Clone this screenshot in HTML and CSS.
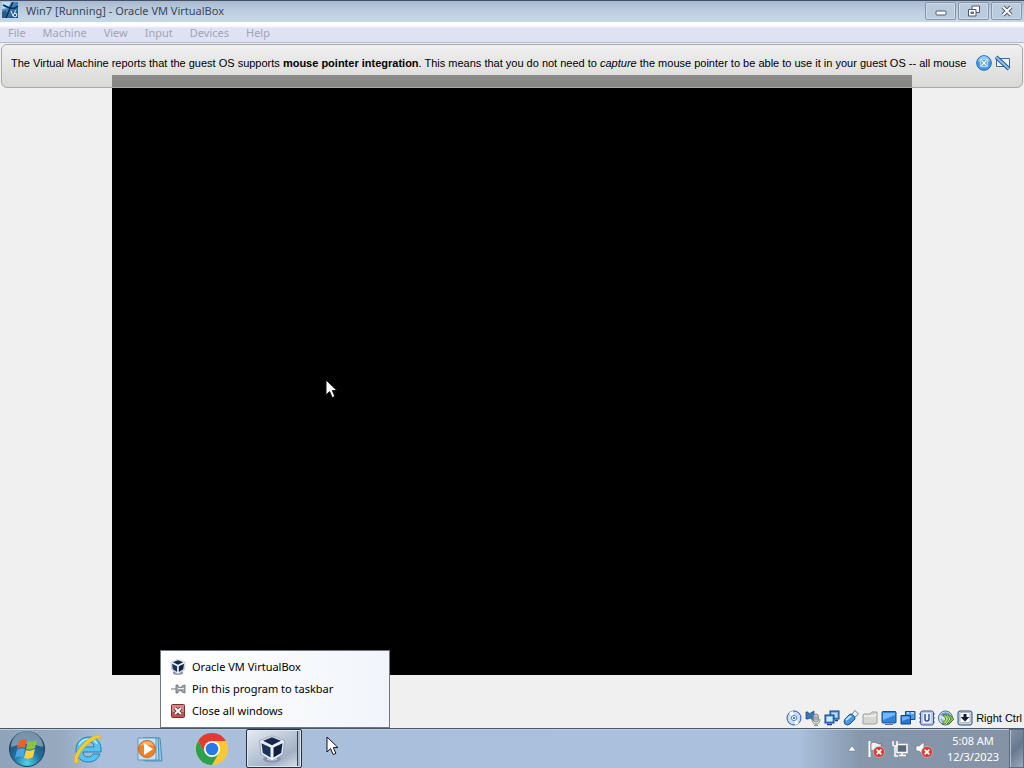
FILE: index.html
```html
<!DOCTYPE html>
<html lang="en">
<head>
    <meta charset="UTF-8">
    <meta name="viewport" content="width=device-width, initial-scale=1.0">
    <title>Win7 [Running] - Oracle VM VirtualBox</title>
    <link rel="stylesheet" href="styles.css">
</head>
<body>
    <svg class="defs" aria-hidden="true">
        <symbol id="vbox" viewBox="0 0 28 28">
            <ellipse cx="14" cy="24" rx="9" ry="3.500" fill="#8793aa"/>
            <ellipse cx="14" cy="23.500" rx="5" ry="2" fill="#e5eaf4"/>
            <path d="M1.500 5.500 14 .8l12.500 4.700-1.500 13.700L14 26 3 19.200z" fill="#e9eef7" stroke="#8290aa" stroke-width=".7"/>
            <path d="M5 5.800 14 2.200l9 3.600-9 4.400z" fill="#13284a"/>
            <path d="M3.500 8.200 12.500 12.600v10L4.800 18z" fill="#1c3359"/>
            <path d="M24.500 8.200 15.500 12.600v10l7.700-4.600z" fill="#10213e"/>
        </symbol>
        <symbol id="pointer" viewBox="0 0 13 20">
            <path d="M1 1v15l3.600-3.400 2.600 6 2.700-1.200-2.600-5.800H12z" fill="#fff" stroke="#111" stroke-width="1"/>
        </symbol>
        <symbol id="badge-x" viewBox="0 0 10 10">
            <circle cx="5" cy="5" r="4.600" fill="#cf3b36" stroke="#f0b0a8" stroke-width=".6"/>
            <path d="M3 3l4 4M7 3L3 7" stroke="#fff" stroke-width="1.500"/>
        </symbol>
    </svg>

    <div class="window">
        <header class="titlebar">
            <svg class="app-icon" viewBox="0 0 17 17">
                <defs>
                    <linearGradient id="app" x1="0" y1="0" x2="1" y2="1">
                        <stop offset="0" stop-color="#6db4e6"/>
                        <stop offset="1" stop-color="#0b4784"/>
                    </linearGradient>
                </defs>
                <path d="M0 0h16v16H0z" fill="url(#app)"/>
                <path d="M0 0h9L6 6 0 7z" fill="#b5e0f7"/>
                <path d="M0 10l4-2 1 8H0z" fill="#2a5a86"/>
                <path d="M11 0Q7 8 4 16M1 3q7 4 12 3l3-2" fill="none" stroke="#102f50" stroke-width="1.500"/>
                <path d="M9 9l2 5 3-6M12 11l3 1-1 3-3-1" fill="none" stroke="#e8f3fc"/>
            </svg>
            <h1>Win7 [Running] - Oracle VM VirtualBox</h1>
            <div class="window-buttons">
                <button aria-label="Minimize">
                    <svg viewBox="0 0 14 12"><rect x="2" y="6" width="10" height="4" rx="1" fill="#fff" stroke="#50586a"/></svg>
                </button>
                <button aria-label="Restore">
                    <svg viewBox="0 0 14 12">
                        <path d="M5 1h7.500v6.500H5z" fill="#fff" stroke="#50586a"/>
                        <path d="M1.500 4.500h7.500V11H1.500z" fill="#fff" stroke="#50586a"/>
                        <path d="M4 7h2.500v1.500H4z" fill="#b9c8dc" stroke="#50586a"/>
                    </svg>
                </button>
                <button aria-label="Close">
                    <svg viewBox="0 0 14 12">
                        <path d="M3 2l8 8M11 2l-8 8" stroke="#50586a" stroke-width="4"/>
                        <path d="M3 2l8 8M11 2l-8 8" stroke="#fff" stroke-width="2"/>
                    </svg>
                </button>
            </div>
        </header>

        <nav class="menubar">
            <a href="#">File</a>
            <a href="#">Machine</a>
            <a href="#">View</a>
            <a href="#">Input</a>
            <a href="#">Devices</a>
            <a href="#">Help</a>
        </nav>

        <main class="guest">
            <div class="message">
                <p>The Virtual Machine reports that the guest OS supports <b>mouse pointer integration</b>. This means that you do not need to <i>capture</i> the mouse pointer to be able to use it in your guest OS -- all mouse</p>
                <button aria-label="Close message">
                    <svg viewBox="0 0 16 16">
                        <circle cx="8" cy="8" r="7.300" fill="#4a9ce6" stroke="#1668b5"/>
                        <path d="M2 7a6 6 0 0 1 12 0q-6-3-12 0z" fill="#8fcaf7"/>
                        <rect x="4" y="4" width="8" height="8" rx="1.500" fill="#c9e6fc"/>
                        <path d="M5.500 5.500l5 5M10.500 5.500l-5 5" stroke="#1f6fb8" stroke-width="3"/>
                        <path d="M5.500 5.500l5 5M10.500 5.500l-5 5" stroke="#fff" stroke-width="1.600"/>
                    </svg>
                </button>
                <button aria-label="Do not show again">
                    <svg viewBox="0 0 16 16">
                        <path d="M1.500 3.500h13v8h-1.500V15l-3.500-3.500h-8z" fill="#edf3fb" stroke="#44678f"/>
                        <path d="M1 2l13 12" stroke="#21558f" stroke-width="4"/>
                        <path d="M1 2l13 12" stroke="#83c2f3" stroke-width="2.200"/>
                    </svg>
                </button>
            </div>
            <div class="display">
                <svg class="guest-pointer"><use href="#pointer"/></svg>
            </div>
        </main>

        <footer class="statusbar">
            <svg viewBox="0 0 16 16"><title>Optical drives</title>
                <circle cx="8" cy="8" r="7" fill="#c9def5" stroke="#2f4fa8"/>
                <path d="M8 8L3 3a7 7 0 0 1 4-2zM8 8l5 5a7 7 0 0 1-4 2z" fill="#fff"/>
                <circle cx="8" cy="8" r="2.600" fill="#fff" stroke="#4e83c4"/>
                <circle cx="8" cy="8" r="1" fill="#1f4c8a"/>
            </svg>
            <svg viewBox="0 0 16 16"><title>Audio</title>
                <path d="M1 2h2l1 2 5-3v10L5 8 3 9H1z" fill="#3d78b6" stroke="#1c4673" stroke-width=".7"/>
                <rect x="8.500" y="4" width="5" height="8" rx="2.500" fill="#c6cbc7" stroke="#7f8984"/>
                <path d="M7 9q0 5 4 5t4-5M11 14v2M9 15.500h4M9 7h4M9 9h4" fill="none" stroke="#88928d"/>
            </svg>
            <svg viewBox="0 0 16 16"><title>Network</title>
                <rect x="6" y="1" width="9" height="8" fill="#4f9be6" stroke="#17427f"/>
                <rect x="7.500" y="2.500" width="6" height="5" fill="#b7dbfa"/>
                <path d="M11 10.500h3" stroke="#17427f" stroke-width="1.500"/>
                <rect x="1" y="5" width="9" height="8" fill="#3d88dd" stroke="#17427f"/>
                <rect x="2.500" y="6.500" width="6" height="5" fill="#d3eafd"/>
                <path d="M3 14.500h5" stroke="#17427f" stroke-width="1.500"/>
            </svg>
            <svg viewBox="0 0 16 16"><title>USB</title>
                <path d="M8.500 4.500l3.500-4 3.500 3.500-4 3.500z" fill="#eef3f8" stroke="#58789c"/>
                <path d="M2 9l5-5q2 0 3.500 1.500T12 9l-5 5q-3 2-5 0-2-2 0-5z" fill="#4b97df" stroke="#1c518f"/>
                <path d="M3 10l5-4" stroke="#c0e2fb" stroke-width="2"/>
            </svg>
            <svg viewBox="0 0 16 16"><title>Shared folders</title>
                <path d="M1 5l1-1h6l2-2h5v11l-2 1H1z" fill="#d6d6d3" stroke="#a0a19e"/>
                <path d="M2 6h11l1-2" fill="none" stroke="#fff"/>
            </svg>
            <svg viewBox="0 0 16 16"><title>Display</title>
                <rect x="1" y="1.500" width="14" height="11.500" rx="1" fill="#2f83dd" stroke="#1b4e90"/>
                <path d="M2 3h12v2L2 10z" fill="#72b8f4"/>
                <path d="M4 14.500h8" stroke="#59748f"/>
            </svg>
            <svg viewBox="0 0 16 16"><title>Recording</title>
                <path d="M5.500 1.500h9.500v8H5.500z" fill="#4d9ae8" stroke="#1c4a8c"/>
                <path d="M7 3h2M11 3h3" stroke="#d8edff" stroke-width="1.500"/>
                <path d="M1 5.500h9.500v8.500H1z" fill="#2874d4" stroke="#174586"/>
                <path d="M2 6.500h7.500v2L2 11z" fill="#6cb0f2"/>
            </svg>
            <svg viewBox="0 0 16 16"><title>Processor</title>
                <rect x="1.500" y="1" width="13" height="14" rx="2" fill="#b9c9f1" stroke="#43579c"/>
                <rect x="4" y="3" width="8" height="10" fill="#eef2ff"/>
                <path d="M6 4v5q0 2 2 2t2-2V4" fill="none" stroke="#354f9d" stroke-width="1.500"/>
                <path d="M0 4h2M0 8h2M0 12h2M14 4h2M14 8h2M14 12h2" stroke="#43579c"/>
            </svg>
            <svg viewBox="0 0 16 16"><title>Mouse integration</title>
                <circle cx="7.500" cy="8" r="7" fill="#d5e6f2" stroke="#466f96"/>
                <path d="M2 5q5-5 10-1L7 7z" fill="#6998bd"/>
                <path d="M3 9l4 5" stroke="#7ca8c8" stroke-width="2"/>
                <path d="M5 5h3l3 4-4 5H4l4-5z" fill="#b7e35c" stroke="#376d1d" stroke-width=".8"/>
                <path d="M10 5h2l4 4-5 5H9l4-5z" fill="#7fc93c" stroke="#376d1d" stroke-width=".8"/>
            </svg>
            <svg viewBox="0 0 16 16"><title>Keyboard</title>
                <rect x="1" y="1" width="14" height="14" rx="2" fill="#c9d8e8" stroke="#294e7a"/>
                <rect x="3" y="2.500" width="10" height="10" rx="1" fill="#fff" stroke="#8095ad" stroke-width=".6"/>
                <path d="M6.500 4h3v3h3L8 11.500 3.500 7h3z" fill="#111d2d"/>
            </svg>
            <span>Right Ctrl</span>
        </footer>
    </div>

    <div class="taskbar">
        <button class="start" aria-label="Start">
            <svg viewBox="0 0 38 38">
                <defs>
                    <radialGradient id="orb" cx=".5" cy=".9" r=".85">
                        <stop offset="0" stop-color="#4fd6ef"/>
                        <stop offset=".45" stop-color="#20719e"/>
                        <stop offset="1" stop-color="#27486c"/>
                    </radialGradient>
                </defs>
                <circle cx="19" cy="19" r="17.500" fill="url(#orb)" stroke="#1d4059"/>
                <path d="M3 17a16 16 0 0 1 32 0q-16-6-32 0z" fill="#c6d9e6" opacity=".5"/>
                <path d="M11 11q4-3 8-1l-2 8q-4-2-8 1z" fill="#e8622b"/>
                <path d="M20 11q4 2 9-1l-2 8q-4 3-9 1z" fill="#8bc53f"/>
                <path d="M9 20q4-3 8-1l-2 8q-4-2-8 1z" fill="#4ba7e3"/>
                <path d="M18 20q4 2 9-1l-2 8q-4 3-9 1z" fill="#fbd044"/>
            </svg>
        </button>
        <div class="apps">
            <button aria-label="Internet Explorer">
                <svg viewBox="0 0 32 32">
                    <path d="M17 4C9 4 4 10 4 17s5 12 12 12c6 0 10-3 12-8h-7c-1 2-3 3-5 3-3 0-5-2-5-5h18C30 10 25 4 17 4zm-6 10c1-3 3-5 6-5s5 2 5 5z" fill="#55c3ee" stroke="#2381b5" stroke-width="1"/>
                    <path d="M7 12q3-6 10-6 6 0 8 5" fill="none" stroke="#b8ecfb" stroke-width="1.500"/>
                    <path d="M29 3c-2-3-10 0-17 7S0 26 3 30c1 1 3 0 4-1-3-1 0-9 6-15S27 3 29 6z" fill="#f4cc35" stroke="#d4a21c" stroke-width=".6"/>
                </svg>
            </button>
            <button aria-label="Windows Media Player">
                <svg viewBox="0 0 32 32">
                    <path d="M11 5h15l2 23H11z" fill="#91c7e4" stroke="#488db7"/>
                    <path d="M9 5h15l1 22H9z" fill="#b4d8ec" stroke="#488db7"/>
                    <path d="M4 5h18v22H4z" fill="#c8e0ef" stroke="#5d99bd"/>
                    <circle cx="13" cy="16" r="8.500" fill="#ee8129" stroke="#cf651b"/>
                    <path d="M6 13a7.500 7.500 0 0 1 14 0q-7-2-14 0z" fill="#f6b16c"/>
                    <path d="M10 10l9 6-9 6z" fill="#fff"/>
                </svg>
            </button>
            <button aria-label="Google Chrome">
                <svg viewBox="0 0 32 32">
                    <circle cx="16" cy="16" r="16" fill="#fcc934"/>
                    <path d="M2.140 8A16 16 0 0 1 29.860 8H16L9.070 20z" fill="#e33b2e"/>
                    <path d="M2.140 8A16 16 0 0 0 16 32L22.930 20H9.070z" fill="#2da04e"/>
                    <circle cx="16" cy="16" r="8" fill="#fff"/>
                    <circle cx="16" cy="16" r="6.300" fill="#2878e8"/>
                </svg>
            </button>
            <button class="active" aria-label="Oracle VM VirtualBox">
                <svg><use href="#vbox"/></svg>
            </button>
        </div>

        <div class="jumplist">
            <button><svg><use href="#vbox"/></svg>Oracle VM VirtualBox</button>
            <button>
                <svg viewBox="0 0 16 16">
                    <path d="M1 8h6" stroke="#777" stroke-width="1"/>
                    <path d="M6 4h2v2l4 .5V5l3-1v8l-3-1V9.500L8 10v2H6z" fill="#a9acae" stroke="#666a6d" stroke-width=".8"/>
                    <path d="M8 7.500h6" stroke="#eee"/>
                </svg>
                Pin this program to taskbar
            </button>
            <button>
                <svg viewBox="0 0 16 16">
                    <rect x="1.500" y="1.500" width="13" height="13" rx="1" fill="#d98786" stroke="#79312f"/>
                    <path d="M2 9h12v5H2z" fill="#c4504f"/>
                    <path d="M5 5l6 6M11 5l-6 6" stroke="#542a2a" stroke-width="3.600"/>
                    <path d="M5 5l6 6M11 5l-6 6" stroke="#fff" stroke-width="2"/>
                </svg>
                Close all windows
            </button>
        </div>

        <div class="tray">
            <button class="tray-arrow" aria-label="Show hidden icons"><svg viewBox="0 0 10 6"><path d="M5 0l4 5H1z" fill="#fff" stroke="#6f7e90" stroke-width=".6"/></svg></button>
            <svg viewBox="0 0 18 18"><title>Action Center</title>
                <path d="M2.500 1v16" stroke="#fff" stroke-width="2"/>
                <path d="M4 3q3-2 6 0t4 0v8q-2 2-4 0t-6 0z" fill="#eef2f6" stroke="#59687a" stroke-width=".7"/>
                <use href="#badge-x" x="6" y="6" width="12" height="12"/>
            </svg>
            <svg viewBox="0 0 18 18"><title>Network</title>
                <path d="M6 4.500h10v8H6z" fill="#59687b" stroke="#fff" stroke-width="1.500"/>
                <path d="M8 15.500h7M11 13v2" stroke="#fff" stroke-width="1.500"/>
                <path d="M2 1v4q0 1 2 1t2-1V1M4 6v10h3" fill="none" stroke="#fff" stroke-width="1.500"/>
            </svg>
            <svg viewBox="0 0 18 18"><title>Volume</title>
                <path d="M1 6h3l5-4v13l-5-4H1z" fill="#fff" stroke="#68788b" stroke-width=".7"/>
                <use href="#badge-x" x="6" y="6" width="12" height="12"/>
            </svg>
            <div class="clock"><time>5:08 AM</time><time>12/3/2023</time></div>
            <button class="show-desktop" aria-label="Show desktop"></button>
        </div>
        <svg class="host-pointer"><use href="#pointer"/></svg>
    </div>
</body>
</html>
```
FILE: styles.css
```css
* {
    box-sizing: border-box;
}

body {
    display: flex;
    flex-direction: column;
    min-height: 100vh;
    margin: 0;
    font-family: "Noto Sans", "Open Sans", sans-serif;
    font-size: 11px;
    line-height: 16px;
    background: #f0f0f0;
}

button {
    padding: 0;
    border: none;
    background: none;
    font: inherit;
    color: inherit;
}

svg {
    display: block;
    flex: none;
    width: 16px;
    height: 16px;
}

.defs {
    position: absolute;
    width: 0;
    height: 0;
}

.window {
    display: flex;
    flex: 1;
    flex-direction: column;
}

/* title bar */
.titlebar {
    display: flex;
    align-items: center;
    height: 22px;
    padding: 0 2px 2px;
    border-top: 1px solid #465064;
    background: linear-gradient(#a8b9cf, #bfcfe1 50%, #c6d7e6);
}

.app-icon {
    width: 17px;
    height: 17px;
}

.titlebar h1 {
    flex: 1;
    margin: 0 0 0 7px;
    font-size: 11px;
    font-weight: normal;
    color: #39465a;
}

.window-buttons {
    display: flex;
    gap: 2px;
}

.window-buttons button {
    display: flex;
    align-items: center;
    justify-content: center;
    width: 31px;
    height: 18px;
    border: 1px solid #8795aa;
    border-radius: 2px;
    background: #bbcbde;
    box-shadow: inset 0 0 0 1px #cfdbe9;
}

.window-buttons svg {
    width: 14px;
    height: 12px;
}

/* menu bar */
.menubar {
    display: flex;
    gap: 17px;
    height: 21px;
    padding: 3px 8px;
    border-bottom: 1px solid #b5bccd;
    background: linear-gradient(#fdfdff 20%, #dfe3f3 30%, #dfe2f4);
}

.menubar a {
    color: #a2a4b2;
    text-decoration: none;
}

/* guest screen */
.guest {
    display: flex;
    flex: 1;
    flex-direction: column;
    padding: 1px 1px 0;
}

.message {
    z-index: 1;
    display: flex;
    gap: 3px;
    height: 44px;
    margin-bottom: -13px;
    padding: 10px 11px 0 9px;
    border: 1px solid #a9a9a9;
    border-radius: 6px;
    background: linear-gradient(rgba(240, 240, 240, 0.65), rgba(205, 205, 203, 0.65));
}

.message p {
    flex: 1;
    margin: 0;
    font-family: "Liberation Sans", Arial, sans-serif;
    white-space: nowrap;
}

.message button {
    height: 16px;
}

.display {
    position: relative;
    align-self: center;
    width: 800px;
    max-width: 100%;
    height: 600px;
    background: #000;
}

.guest-pointer {
    position: absolute;
    top: 304px;
    left: 213px;
    width: 13px;
    height: 20px;
}

/* status bar */
.statusbar {
    display: flex;
    gap: 3px;
    align-items: center;
    justify-content: flex-end;
    height: 20px;
    padding-right: 2px;
    font-family: "Liberation Sans", Arial, sans-serif;
}

/* taskbar */
.taskbar {
    position: relative;
    display: flex;
    height: 40px;
    border-top: 1px solid #48586a;
    background: linear-gradient(90deg, #8fa4ba, #96a9bf 60px, #a9bfdc 100px, #aac0dd 78%, #8697ac 84%, #8592a5);
    box-shadow: inset 0 1px #bdcede;
}

.start {
    width: 54px;
    padding-left: 8px;
}

.start svg {
    width: 38px;
    height: 38px;
}

.apps {
    display: flex;
    gap: 6px;
    margin-left: 6px;
}

.apps button {
    display: flex;
    align-items: center;
    justify-content: center;
    width: 56px;
}

.apps svg {
    width: 32px;
    height: 32px;
}

.apps .active {
    padding-right: 5px;
    border: 1px solid #27323f;
    border-radius: 2px;
    background: linear-gradient(90deg, transparent 50px, #354252 50px, #354252 51px, #a9b8ca 51px), linear-gradient(150deg, #e6ebf1, #b6c3d5 50%, #a2b0c5 70%, #dce3ec);
    box-shadow: inset 0 0 0 1px #dde5ee;
}

.apps .active svg {
    width: 28px;
    height: 28px;
}

.jumplist {
    position: absolute;
    bottom: 40px;
    left: 160px;
    z-index: 2;
    width: 230px;
    padding: 5px 9px;
    border: 1px solid #6e7680;
    background: linear-gradient(90deg, #fff, #f1f5fb);
}

.jumplist button {
    display: flex;
    gap: 6px;
    align-items: center;
    width: 100%;
    height: 22px;
}

.host-pointer {
    position: absolute;
    top: 7px;
    left: 326px;
    width: 13px;
    height: 20px;
}

/* notification area */
.tray {
    display: flex;
    gap: 6px;
    align-items: center;
    margin-left: auto;
    color: #fff;
}

.tray svg {
    width: 18px;
    height: 18px;
}

.tray .tray-arrow {
    margin-right: 4px;
}

.tray .tray-arrow svg {
    width: 10px;
    height: 6px;
}

.clock {
    display: flex;
    flex-direction: column;
    width: 64px;
    padding-left: 4px;
    text-align: center;
}

.show-desktop {
    align-self: stretch;
    width: 15px;
    border: 1px solid #5c6b80;
    background: linear-gradient(135deg, #8493a7, #68788e 50%, #9ba9bb);
    box-shadow: inset 1px 0 #b5c1cf;
}
```
